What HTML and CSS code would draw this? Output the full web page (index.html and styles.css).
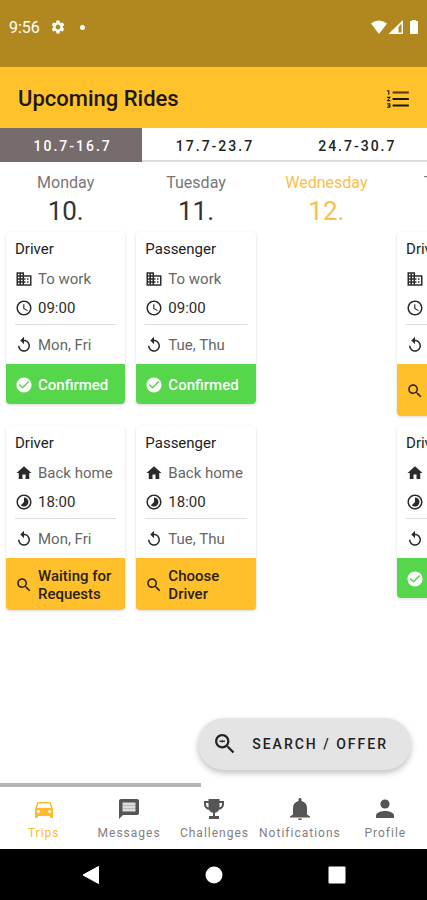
FILE: index.html
```html
<!DOCTYPE html>
<html lang="en">
<head>
<meta charset="utf-8">
<meta name="viewport" content="width=device-width, initial-scale=1">
<title>Upcoming Rides</title>
<link rel="stylesheet" href="styles.css">
</head>
<body>
<svg class="sprite" aria-hidden="true">
  <symbol id="office" viewBox="0 0 24 24"><path d="M12 7V3H2v18h20V7H12zM6 19H4v-2h2v2zm0-4H4v-2h2v2zm0-4H4V9h2v2zm0-4H4V5h2v2zm4 12H8v-2h2v2zm0-4H8v-2h2v2zm0-4H8V9h2v2zm0-4H8V5h2v2zm10 12h-8v-2h2v-2h-2v-2h2v-2h-2V9h8v10zm-2-8h-2v2h2v-2zm0 4h-2v2h2v-2z"/></symbol>
  <symbol id="home" viewBox="0 0 24 24"><path d="M10 20v-6h4v6h5v-8h3L12 3 2 12h3v8z"/></symbol>
  <symbol id="clock" viewBox="0 0 24 24"><path d="M11.99 2C6.47 2 2 6.48 2 12s4.47 10 9.99 10C17.52 22 22 17.52 22 12S17.52 2 11.99 2zM12 20c-4.42 0-8-3.58-8-8s3.580-8 8-8 8 3.580 8 8-3.580 8-8 8zm.5-13H11v6l5.250 3.150.750-1.230-4.500-2.670z"/></symbol>
  <symbol id="timelapse" viewBox="0 0 24 24"><path d="M16.240 7.760C15.070 6.590 13.540 6 12 6v6l-4.240 4.240c2.340 2.340 6.140 2.340 8.490 0 2.340-2.340 2.340-6.140-.010-8.480zM12 2C6.480 2 2 6.480 2 12s4.480 10 10 10 10-4.480 10-10S17.520 2 12 2zm0 18c-4.420 0-8-3.580-8-8s3.580-8 8-8 8 3.580 8 8-3.580 8-8 8z"/></symbol>
  <symbol id="repeat" viewBox="0 0 24 24"><path d="M12 5V1L7 6l5 5V7c3.310 0 6 2.690 6 6s-2.690 6-6 6-6-2.690-6-6H4c0 4.420 3.580 8 8 8s8-3.580 8-8-3.580-8-8-8z"/></symbol>
  <symbol id="check" viewBox="0 0 24 24"><path d="M12 2C6.480 2 2 6.480 2 12s4.480 10 10 10 10-4.480 10-10S17.520 2 12 2zm-2 15l-5-5 1.410-1.410L10 14.170l7.590-7.590L19 8l-9 9z"/></symbol>
  <symbol id="search" viewBox="0 0 24 24"><path d="M15.500 14h-.790l-.280-.270C15.410 12.590 16 11.110 16 9.500 16 5.910 13.090 3 9.500 3S3 5.910 3 9.500 5.910 16 9.500 16c1.610 0 3.090-.590 4.230-1.570l.270.280v.790l5 4.990L20.490 19l-4.990-5zm-6 0C7.010 14 5 11.990 5 9.500S7.010 5 9.500 5 14 7.010 14 9.500 11.990 14 9.500 14z"/></symbol>
</svg>

<header>
  <div class="status">
    <span class="time">9:56</span>
    <svg class="gear" viewBox="0 0 24 24"><path d="M19.140 12.940c.040-.300.060-.610.060-.940 0-.320-.020-.640-.070-.940l2.030-1.580c.180-.140.230-.410.120-.610l-1.920-3.320c-.120-.220-.370-.290-.590-.220l-2.390.960c-.500-.380-1.030-.700-1.620-.940l-.360-2.540c-.040-.240-.240-.410-.480-.410h-3.840c-.240 0-.430.170-.470.410l-.360 2.540c-.590.240-1.130.570-1.620.940l-2.390-.960c-.220-.080-.470 0-.590.220L2.740 8.870c-.120.210-.080.470.120.610l2.030 1.580c-.050.300-.090.630-.090.940s.020.640.070.940l-2.030 1.580c-.180.140-.230.410-.120.610l1.920 3.320c.120.220.370.290.590.220l2.390-.960c.500.380 1.030.700 1.620.940l.360 2.540c.050.240.240.410.480.410h3.840c.240 0 .440-.170.470-.410l.360-2.540c.590-.240 1.130-.560 1.620-.940l2.390.960c.220.080.470 0 .590-.220l1.920-3.320c.120-.220.070-.470-.120-.610l-2.010-1.580zM12 15.600c-1.980 0-3.600-1.620-3.600-3.600s1.620-3.600 3.600-3.600 3.600 1.620 3.600 3.600-1.620 3.600-3.600 3.600z"/></svg>
    <span class="dot"></span>
    <svg class="signals" viewBox="0 0 50 16"><path d="M1 4.500Q8.500-1.500 17 4.500L9 15z"/><path fill-rule="evenodd" d="M33 1v14H18.500zM28.500 8v5.500h3V4.500z"/><path d="M42 1h4v1h2v13h-8V2h2z"/></svg>
  </div>
  <div class="appbar">
    <h1>Upcoming Rides</h1>
    <button class="list-button" aria-label="Numbered list"><svg viewBox="0 0 24 24"><path d="M2 17h2v.5H3v1h1v.5H2v1h3v-4H2v1zm1-9h1V4H2v1h1v3zm-1 3h1.800L2 13.100v.9h3v-1H3.200L5 10.900V10H2v1zm5 8h15v-2H7v2zm0-6h15v-2H7v2z"/><path d="M7 5h15v2H7z" opacity=".75"/></svg></button>
  </div>
  <div class="weeks">
    <button class="week active">10.7-16.7</button>
    <button class="week">17.7-23.7</button>
    <button class="week">24.7-30.7</button>
  </div>
</header>

<main>
  <div class="board">
    <h2 class="day">Monday<b>10.</b></h2>
    <h2 class="day">Tuesday<b>11.</b></h2>
    <h2 class="day today">Wednesday<b>12.</b></h2>
    <h2 class="day">Thursday<b>13.</b></h2>

    <article class="card c1">
      <h3>Driver</h3>
      <p><svg><use href="#office"/></svg>To work</p>
      <p class="hour"><svg><use href="#clock"/></svg>09:00</p>
      <p class="repeat"><svg><use href="#repeat"/></svg>Mon, Fri</p>
      <button class="state ok"><svg><use href="#check"/></svg>Confirmed</button>
    </article>
    <article class="card c2">
      <h3>Passenger</h3>
      <p><svg><use href="#office"/></svg>To work</p>
      <p class="hour"><svg><use href="#clock"/></svg>09:00</p>
      <p class="repeat"><svg><use href="#repeat"/></svg>Tue, Thu</p>
      <button class="state ok"><svg><use href="#check"/></svg>Confirmed</button>
    </article>
    <article class="card c4">
      <h3>Driver</h3>
      <p><svg><use href="#office"/></svg>To work</p>
      <p class="hour"><svg><use href="#clock"/></svg>09:00</p>
      <p class="repeat"><svg><use href="#repeat"/></svg>Thu</p>
      <button class="state wait"><svg><use href="#search"/></svg>Waiting for Requests</button>
    </article>

    <article class="card c1">
      <h3>Driver</h3>
      <p><svg><use href="#home"/></svg>Back home</p>
      <p class="hour"><svg><use href="#timelapse"/></svg>18:00</p>
      <p class="repeat"><svg><use href="#repeat"/></svg>Mon, Fri</p>
      <button class="state wait"><svg><use href="#search"/></svg>Waiting for Requests</button>
    </article>
    <article class="card c2">
      <h3>Passenger</h3>
      <p><svg><use href="#home"/></svg>Back home</p>
      <p class="hour"><svg><use href="#timelapse"/></svg>18:00</p>
      <p class="repeat"><svg><use href="#repeat"/></svg>Tue, Thu</p>
      <button class="state wait"><svg><use href="#search"/></svg>Choose Driver</button>
    </article>
    <article class="card c4">
      <h3>Driver</h3>
      <p><svg><use href="#home"/></svg>Back home</p>
      <p class="hour"><svg><use href="#timelapse"/></svg>18:00</p>
      <p class="repeat"><svg><use href="#repeat"/></svg>Thu</p>
      <button class="state ok"><svg><use href="#check"/></svg>Confirmed</button>
    </article>
  </div>
  <button class="fab"><svg viewBox="2 2 20 20"><use href="#search" width="24" height="24"/><path d="M7 8.900h5v1.200H7z"/><path d="M8.900 7.800h1.200v3.400H8.900z" opacity=".4"/></svg>SEARCH / OFFER</button>
  <div class="scroll-track"><div class="scroll-thumb"></div></div>
</main>

<nav class="tabs">
  <a class="current" href="#trips"><svg viewBox="0 0 24 24"><path d="M18.920 6.010C18.720 5.420 18.160 5 17.500 5h-11c-.660 0-1.210.420-1.420 1.010L3 12v8c0 .550.450 1 1 1h1c.550 0 1-.450 1-1v-1h12v1c0 .550.450 1 1 1h1c.550 0 1-.450 1-1v-8l-2.080-5.990zM6.500 16c-.830 0-1.500-.670-1.500-1.500S5.670 13 6.500 13s1.500.670 1.500 1.500S7.330 16 6.500 16zm11 0c-.830 0-1.500-.670-1.500-1.500s.670-1.500 1.500-1.500 1.500.670 1.500 1.500-.670 1.500-1.500 1.500zM5 11l1.500-4.500h11L19 11H5z"/></svg>Trips</a>
  <a href="#messages"><svg viewBox="0 0 24 24"><path d="M20 2H4c-1.100 0-1.990.900-1.990 2L2 22l4-4h14c1.100 0 2-.900 2-2V4c0-1.100-.900-2-2-2z"/><path class="pale" d="M5.500 5.500h13v9h-13z"/><path d="M5.500 8h13v1h-13zM5.500 11h13v1h-13z" opacity=".25"/></svg>Messages</a>
  <a href="#challenges"><svg viewBox="0 0 24 24"><path fill-rule="evenodd" d="M6.500 2h11v2H22v3c0 3-2 5.500-5 5.700-.900 1.700-2.200 2.700-4 3.100V19h4v3H7v-3h4v-3.200c-1.800-.400-3.100-1.400-4-3.100C4 12.500 2 10 2 7V4h4.500zM4 6v1c0 1.700 1 3 2.500 3.500V6zm16 0h-2.500v4.500C19 10 20 8.700 20 7z"/></svg>Challenges</a>
  <a href="#notifications"><svg viewBox="0 0 24 24"><path d="M12 23c1.100 0 2-.7 2-1.600h-4c0 .9.900 1.600 2 1.600zm7-5.500V11c0-3.500-1.900-6.200-5.500-7V2.500C13.500 1.700 12.800 1 12 1s-1.500.700-1.500 1.500V4C6.900 4.800 5 7.500 5 11v6.500l-3 2v1h20v-1z"/></svg>Notifications</a>
  <a href="#profile"><svg viewBox="0 0 24 24"><circle cx="12" cy="7" r="4.600"/><path d="M3 21v-2.500c0-3.300 6-4.500 9-4.500s9 1.200 9 4.500V21z"/></svg>Profile</a>
</nav>
<footer class="system">
  <button aria-label="Back"><svg viewBox="0 0 20 20"><path d="M17.500 1.500v17L2 10z" stroke="#fff" stroke-linejoin="round"/></svg></button>
  <button aria-label="Home"><svg viewBox="0 0 20 20"><circle cx="10" cy="10" r="8.500"/></svg></button>
  <button aria-label="Recent apps"><svg viewBox="0 0 20 20"><rect x="1.500" y="1.500" width="17" height="17" rx="1"/></svg></button>
</footer>
</body>
</html>
```
FILE: styles.css
```css
* {
  box-sizing: border-box;
  margin: 0;
}

body {
  display: flex;
  flex-direction: column;
  min-height: 100vh;
  overflow-x: hidden;
  background: #fff;
  color: #222;
  font-family: Roboto, "Liberation Sans", sans-serif;
}

button {
  padding: 0;
  border: 0;
  background: none;
  color: inherit;
  font: inherit;
}

svg {
  flex: none;
  fill: currentColor;
}

.sprite {
  display: none;
}

.status {
  display: flex;
  align-items: center;
  height: 67px;
  padding: 0 7px 13px 9px;
  background: #b18820;
  color: #fff;
  font-size: 16px;
}

.gear {
  width: 16px;
  height: 16px;
  margin-left: 10px;
}

.dot {
  width: 5px;
  height: 5px;
  margin-left: 14px;
  border-radius: 50%;
  background: #fff;
}

.signals {
  width: 50px;
  height: 16px;
  margin-left: auto;
}

.appbar {
  display: flex;
  align-items: center;
  justify-content: space-between;
  height: 61px;
  padding: 2px 16px 0 18px;
  background: #ffc22b;
}

h1 {
  color: #1d1707;
  font-size: 22px;
  font-weight: 500;
}

.list-button {
  display: flex;
  color: #1d1707;
}

.list-button svg {
  width: 26px;
  height: 26px;
}

.weeks {
  display: grid;
  grid-template-columns: repeat(3, 1fr);
  height: 34px;
  border-bottom: 2px solid #dcdcdc;
}

.week {
  height: 34px;
  padding: 2px 0 0 3px;
  font-size: 14px;
  font-weight: 500;
  letter-spacing: 2px;
}

.week.active {
  background: #776c6d;
  color: #fff;
}

main {
  position: relative;
  display: flex;
  flex: 1;
  flex-direction: column;
}

.board {
  display: grid;
  flex: 1;
  grid-template-columns: repeat(4, calc(29% - 1px));
  grid-template-rows: 70px;
  gap: 0 11px;
  align-items: start;
  align-content: start;
  padding: 0 6px 90px;
  overflow-x: auto;
  scrollbar-width: none;
}

.day {
  padding-top: 11px;
  color: #777;
  font-size: 16px;
  font-weight: 400;
  line-height: 20px;
  text-align: center;
}

.day b {
  display: block;
  color: #333;
  font-size: 26px;
  font-weight: 400;
  line-height: 36px;
}

.today,
.today b {
  color: #fbc04a;
}

.card {
  margin-bottom: 10px;
  border-radius: 4px;
  background: #fff;
  box-shadow: 0 1px 3px rgba(0, 0, 0, 0.16);
  color: #666;
  font-size: 15px;
  overflow: hidden;
}

.c1 {
  grid-column: 1;
}

.c2 {
  grid-column: 2;
}

.c4 {
  grid-column: 4;
}

.card h3 {
  padding: 7px 9px 0;
  color: #222;
  font-size: 15px;
  font-weight: 400;
  line-height: 20px;
}

.card p {
  display: flex;
  align-items: center;
  gap: 5px;
  height: 29px;
  margin: 0 9px;
  white-space: nowrap;
}

.card svg {
  width: 18px;
  height: 18px;
}

.card p svg,
.card .hour {
  color: #2b2b2b;
}

.card h3 + p {
  margin-top: 5px;
}

.card .hour {
  margin-bottom: 2px;
}

.card .repeat {
  height: 40px;
  border-top: 1px solid #ddd;
}

.state {
  display: flex;
  align-items: center;
  gap: 5px;
  width: 100%;
  min-height: 40px;
  padding: 9px 9px 7px;
  font-size: 15px;
  font-weight: 500;
  line-height: 18px;
  text-align: left;
}

.ok {
  background: #55d64b;
  color: #fff;
}

.wait {
  background: #ffc02b;
  color: #2b220c;
}

.fab {
  position: absolute;
  right: 16px;
  bottom: 17px;
  display: flex;
  align-items: center;
  gap: 16px;
  height: 52px;
  padding: 0 23px 0 16px;
  border-radius: 26px;
  background: #e4e4e4;
  box-shadow: 0 3px 6px rgba(0, 0, 0, 0.25);
  font-size: 14px;
  font-weight: 500;
  letter-spacing: 2px;
}

.fab svg {
  width: 22px;
  height: 22px;
}

.scroll-thumb {
  width: 47%;
  height: 4px;
  background: #b5b5b5;
}

.tabs {
  display: grid;
  grid-template-columns: repeat(5, 1fr);
  height: 62px;
}

.tabs a {
  display: flex;
  flex-direction: column;
  align-items: center;
  gap: 4px;
  padding: 10px 0 0 2px;
  color: #808080;
  font-size: 12px;
  letter-spacing: 1px;
  line-height: 16px;
  text-decoration: none;
}

.tabs svg {
  width: 24px;
  height: 24px;
  color: #555;
}

.tabs .pale {
  fill: #ddd;
}

.tabs .current,
.tabs .current svg {
  color: #fdbb2c;
}

.system {
  display: grid;
  grid-template-columns: repeat(3, 1fr);
  place-items: center;
  height: 51px;
  padding: 0 29px;
  background: #000;
  color: #fff;
}

.system button {
  display: flex;
}

.system svg {
  width: 20px;
  height: 20px;
}
```
